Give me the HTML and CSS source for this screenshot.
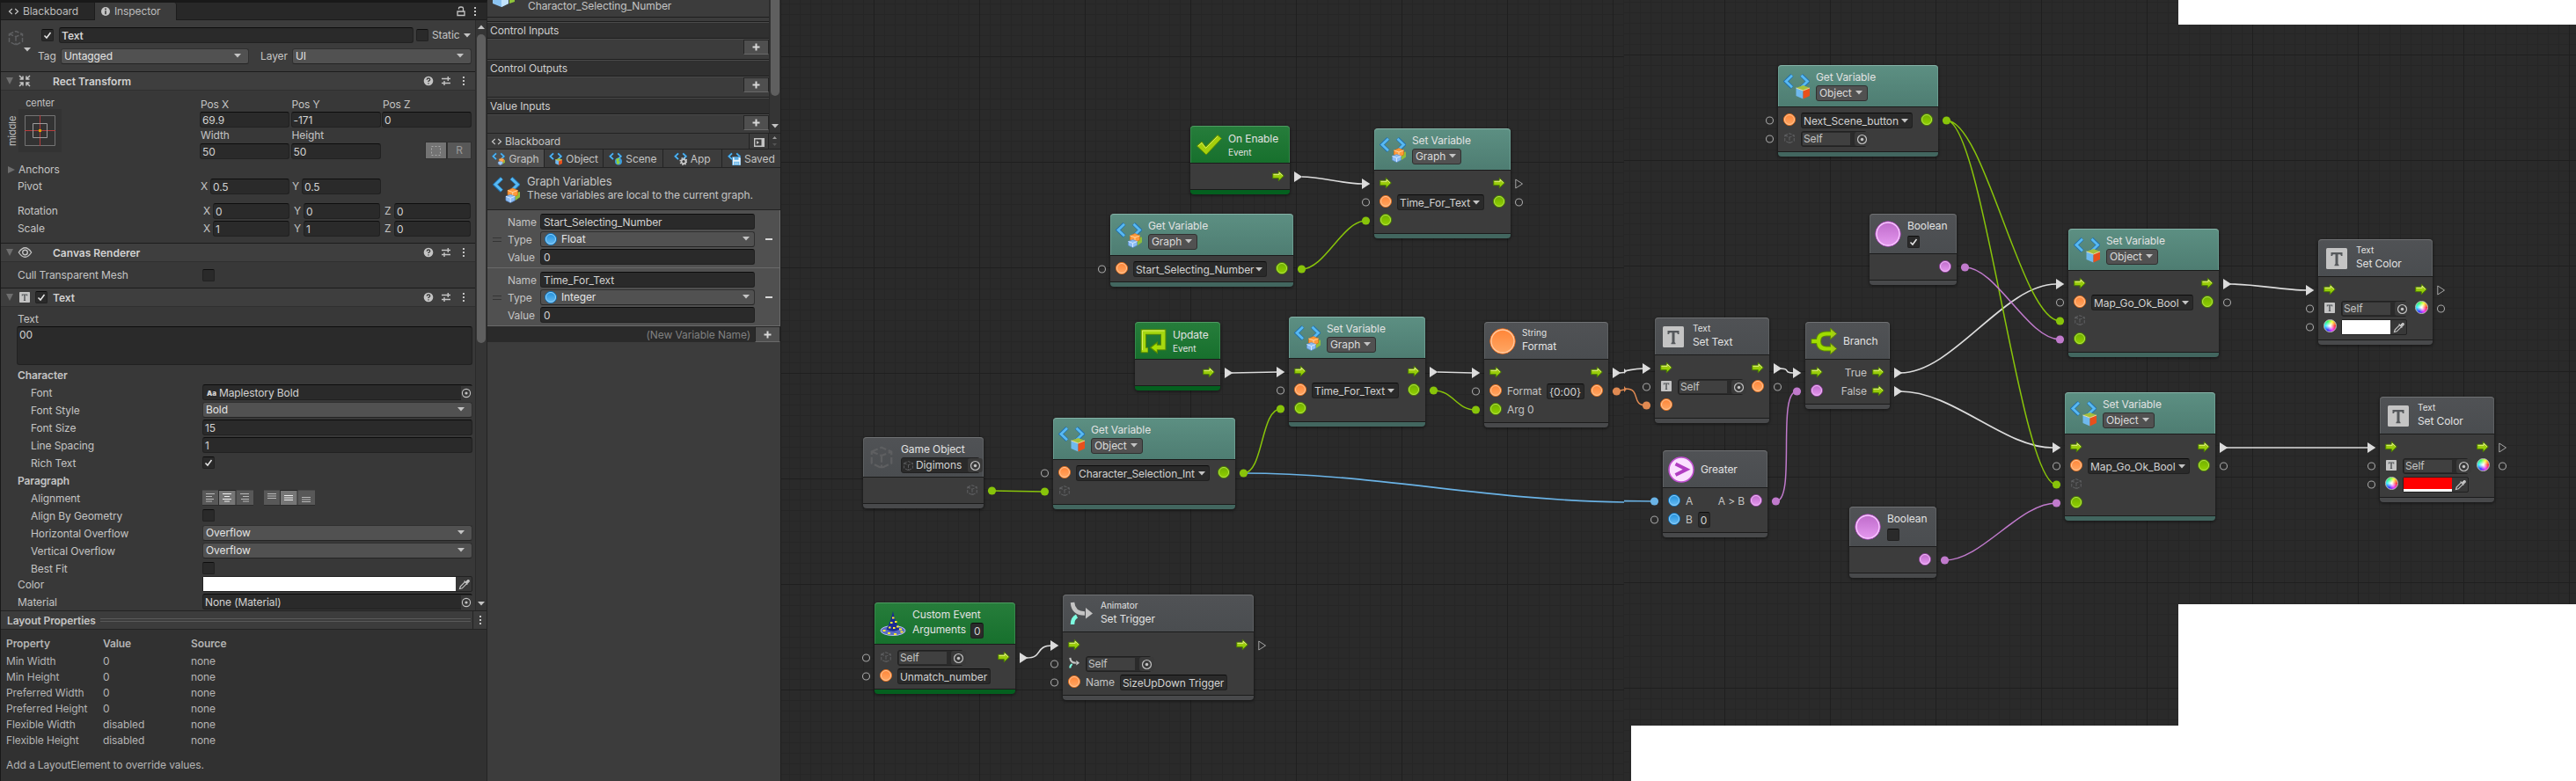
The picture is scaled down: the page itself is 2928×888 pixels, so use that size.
FILE: index.html
```html
<!DOCTYPE html>
<html lang="en">
<head>
<meta charset="utf-8">
<title>Visual Scripting</title>
<link rel="stylesheet" href="styles.css">
</head>
<body>
<svg class="defs" width="0" height="0">
  <defs>
    <linearGradient id="gO" x1="0" y1="0" x2="0" y2="1"><stop offset="0" stop-color="#ff8436"/><stop offset="1" stop-color="#ffa865"/></linearGradient>
    <linearGradient id="gG" x1="0" y1="0" x2="0" y2="1"><stop offset="0" stop-color="#6fae00"/><stop offset="1" stop-color="#93d200"/></linearGradient>
    <linearGradient id="gB" x1="0" y1="0" x2="0" y2="1"><stop offset="0" stop-color="#1d8edb"/><stop offset="1" stop-color="#6cbdf2"/></linearGradient>
    <linearGradient id="gP" x1="0" y1="0" x2="0" y2="1"><stop offset="0" stop-color="#bd69c9"/><stop offset="1" stop-color="#e69af0"/></linearGradient>
    <linearGradient id="gA" x1="0" y1="0" x2="0" y2="1"><stop offset="0" stop-color="#b3cc1a"/><stop offset="1" stop-color="#84cc00"/></linearGradient>
    <symbol id="dO" viewBox="0 0 14 14"><circle cx="7" cy="7" r="6.5" fill="url(#gO)" stroke="#e0701f"/><circle cx="7" cy="7" r="5.5" fill="none" stroke="#ffc79a"/></symbol>
    <symbol id="dG" viewBox="0 0 14 14"><circle cx="7" cy="7" r="6.5" fill="url(#gG)" stroke="#4c8000"/><circle cx="7" cy="7" r="5.5" fill="none" stroke="#b2e04a"/></symbol>
    <symbol id="dB" viewBox="0 0 14 14"><circle cx="7" cy="7" r="6.5" fill="url(#gB)" stroke="#0f6fb5"/><circle cx="7" cy="7" r="5.5" fill="none" stroke="#8fd0fa"/></symbol>
    <symbol id="dP" viewBox="0 0 14 14"><circle cx="7" cy="7" r="6.5" fill="url(#gP)" stroke="#8d3f9a"/><circle cx="7" cy="7" r="5.5" fill="none" stroke="#f0bdf6"/></symbol>
    <symbol id="bigO" viewBox="0 0 30 30"><circle cx="15" cy="15" r="14.3" fill="url(#gO)" stroke="#e2671a"/><circle cx="15" cy="15" r="13" fill="none" stroke="#ffcaa2" stroke-width="1.3"/></symbol>
    <symbol id="bigP" viewBox="0 0 30 30"><circle cx="15" cy="15" r="14.3" fill="url(#gP)" stroke="#a044b0"/><circle cx="15" cy="15" r="13" fill="none" stroke="#f8c8ff" stroke-width="1.4"/></symbol>
    <symbol id="arr" viewBox="0 0 14 14"><path d="M.7 4.3h6.6V1.2L13.3 7l-6 5.800V9.700H.7z" fill="url(#gA)" stroke="#4c7d00"/><path d="M1.500 5.300h6.600V3l3.800 3.700" fill="none" stroke="#e3f08a"/></symbol>
    <symbol id="cube" viewBox="0 0 16 16"><path d="M2 4.500l6-2.500 6 2.500v7L8 14.500 2 11.500zM2 4.500l6 2.500 6-2.500M8 7v7.500" fill="none" stroke="#5e5f61" stroke-width="1.200" stroke-dasharray="4 1.500"/></symbol>
    <symbol id="br" viewBox="0 0 30 30"><path d="M10 2.500L2.800 9.500 10 16.500M20.500 2.500L27.700 9.500 20.500 16.500" fill="none" stroke="#1f6fae" stroke-width="4.400"/><path d="M10 2.800L3 9.500l7 6.700M20.500 2.800L27.500 9.500l-7 6.700" fill="none" stroke="#58b9f2" stroke-width="2.800"/></symbol>
    <symbol id="vG" viewBox="0 0 30 30"><use href="#br" width="30" height="30"/><path d="M22 19l8-1.500v6L25 27z" fill="#8fbd3a"/><path d="M16.500 16l5.500-2.500 5.500 2.500v5L22 23.500l-5.500-2.500z" fill="#ff9a3c" stroke="#d9700f" stroke-width=".7"/><path d="M16.500 16l5.500 2 5.500-2M22 18v5" fill="none" stroke="#ffd9a8" stroke-width=".9"/><path d="M14.500 22.500l5-2 5 2v4.500l-5 2.500-5-2.500z" fill="#8cbdf5" stroke="#5c8fd0" stroke-width=".7"/><path d="M14.500 22.500l5 2 5-2M19.500 24.500v4.500" fill="none" stroke="#dcebff" stroke-width=".9"/></symbol>
    <symbol id="vO" viewBox="0 0 30 30"><use href="#br" width="30" height="30"/><path d="M14.500 17l8-3 7.500 3-7.500 3z" fill="#a4bf3d"/><path d="M14.500 17l8 3v9.500l-8-3.500z" fill="#6fb9ee"/><path d="M30 17l-7.500 3v9.500L30 26z" fill="#e8501c"/><path d="M14.500 17l8 3 7.500-3" fill="none" stroke="#ffe9b0" stroke-width=".8"/></symbol>
    <symbol id="vS" viewBox="0 0 30 30"><use href="#br" width="30" height="30"/><circle cx="22" cy="21" r="8" fill="#3b9be0"/><path d="M16 17q5-6 9-2l-3 5 4 2-4 6q-6-2-4-7z" fill="#8fd03a"/></symbol>
    <symbol id="vA" viewBox="0 0 30 30"><use href="#br" width="30" height="30"/><circle cx="22" cy="21" r="5" fill="none" stroke="#c9c9c9" stroke-width="3.500"/><circle cx="22" cy="21" r="7.700" fill="none" stroke="#c9c9c9" stroke-width="3" stroke-dasharray="3 3.050"/></symbol>
    <symbol id="vD" viewBox="0 0 30 30"><use href="#br" width="30" height="30"/><path d="M11 11h17l2 2v17H11z" fill="#eaf4fb" stroke="#3c8fca" stroke-width="1.500"/><path d="M15 11.500h10v6H15zM14.500 21.500h12V30h-12z" fill="#5aaee6"/><path d="M16 24h9M16 27h9" stroke="#fff"/></symbol>
    <symbol id="chk" viewBox="0 0 30 30"><path d="M1.500 16l5.500-5 4.500 6L25 3.500l4.500 4L12 26z" fill="#a4cf0c" stroke="#5f8a00"/><path d="M2.800 16l4.200-3.500 4.500 6L25 5" fill="none" stroke="#d6ee5e" stroke-width=".9"/></symbol>
    <symbol id="loop" viewBox="0 0 30 30"><path d="M9 25H3.800V4.500h22.400V22H18" fill="none" stroke="#5c8c00" stroke-width="6.400"/><path d="M20 15v14.500L10.500 22.200z" fill="#5c8c00"/><path d="M8.500 25H3.800V4.500h22.400V22H18" fill="none" stroke="#a6d810" stroke-width="4.400"/><path d="M18.800 17.500v9.500l-6.200-4.800z" fill="#a6e000"/><path d="M2.500 25V3h25" fill="none" stroke="#d9ee62"/></symbol>
    <symbol id="branch" viewBox="0 0 30 30"><path d="M.5 15h8.500M24 6.500h-6q-9 0-9 8.500t9 8.500h6" fill="none" stroke="#5c8c00" stroke-width="6.200"/><path d="M22.500 .3l7.300 6.200-7.300 6.200zM22.500 17.300l7.300 6.200-7.300 6.200z" fill="#a6c81a" stroke="#5c8c00"/><path d="M1.300 15h8M25 6.500h-7q-9 0-9 8.500t9 8.500h7" fill="none" stroke="#a0dc00" stroke-width="4.200"/></symbol>
    <symbol id="great" viewBox="0 0 30 30"><circle cx="15" cy="15" r="14" fill="#fbe0ff" stroke="#c24fd2" stroke-width="1.500"/><path d="M8.500 8.500L21 14.700 8.500 21" fill="none" stroke="#b13ec2" stroke-width="4"/></symbol>
    <symbol id="tee" viewBox="0 0 24 24"><rect width="24" height="24" rx="1.500" fill="#c4c4c4"/><path d="M5.500 5h13v4h-1.500l-.8-1.800h-2.700V18l1 1.200v1h-5v-1l1-1.200V7.200H7.800L7 9H5.500z" fill="#55585b"/></symbol>
    <symbol id="trig" viewBox="0 0 30 30"><path d="M5 2q1 12.500 14 12.500" fill="none" stroke="#c4c4c4" stroke-width="4.500"/><path d="M20 8l8 6.500-8 6z" fill="#c4c4c4"/><path d="M5 27q0-7 5-9.500" fill="none" stroke="#7dfce0" stroke-width="4.500"/></symbol>
    <symbol id="hat" viewBox="0 0 30 30"><ellipse cx="15" cy="23" rx="14" ry="5.500" fill="#5b6cc4" stroke="#b4bde8" stroke-width="1"/><path d="M15 1Q12 14 7.500 21.500q7.500 4.500 15 0Q17.500 14 15 1z" fill="#1c2a94"/><path d="M14 8.500h2.500M12 14h2.500M17 13h2.500M10 19.500h2.500M15 20h2.500M19 18.500h2.500M3.500 23h3M9 26h3M16 27h3M23.500 24.500h3M22 21.500h3" stroke="#ffe92e" stroke-width="2"/></symbol>
    <symbol id="pip" viewBox="0 0 14 14"><path d="M1.500 12.500l.8-2.700L7.500 4.600l2 2-5.200 5.200zM6.700 3.500l3.800 3.800" fill="none" stroke="#c4c4c4" stroke-width="1.200"/><path d="M8.500 4.500l2-2q2.200-.8 1.900 1.700l-2 2z" fill="#c4c4c4" stroke="#c4c4c4"/></symbol>
    <symbol id="help" viewBox="0 0 12 12"><circle cx="6" cy="6" r="5.300" fill="#c4c4c4"/><path d="M4.200 4.700q.1-1.700 1.800-1.700t1.800 1.500q0 .9-1.800 1.900v.6M6 8.200v1.300" fill="none" stroke="#3c3c3c" stroke-width="1.300"/></symbol>
    <symbol id="slid" viewBox="0 0 12 12"><path d="M1 3.500h10M8.300 1v5M1 8.500h10M4 6v5" fill="none" stroke="#c4c4c4" stroke-width="1.400"/></symbol>
    <symbol id="keb" viewBox="0 0 4 12"><path d="M1 1h2v2H1zM1 5h2v2H1zM1 9h2v2H1z" fill="#c4c4c4"/></symbol>
    <symbol id="dn" viewBox="0 0 8 5"><path d="M0 0h8L4 4.500z" fill="#c4c4c4"/></symbol>
    <symbol id="tick" viewBox="0 0 14 14"><path d="M3.500 7.500L6 10l4.500-6" fill="none" stroke="#e8e8e8" stroke-width="1.500"/></symbol>
    <symbol id="target" viewBox="0 0 12 12"><circle cx="6" cy="6" r="4.600" fill="none" stroke="#c4c4c4" stroke-width="1.100"/><circle cx="6" cy="6" r="1.600" fill="#c4c4c4"/></symbol>
    <symbol id="code" viewBox="0 0 12 10"><path d="M4.300 2L1 5l3.300 3M7.700 2L11 5 7.700 8" fill="none" stroke="#c4c4c4" stroke-width="1.200"/></symbol>
    <symbol id="plus" viewBox="0 0 9 9"><path d="M4.500 .5v8M.5 4.500h8" stroke="#d8d8d8" stroke-width="2"/></symbol>
    <symbol id="tri" viewBox="0 0 10 14" overflow="visible"><path d="M0 1l9.300 6L0 13z" fill="#dcdcdc"/></symbol>
    <symbol id="triO" viewBox="0 0 10 14" overflow="visible"><path d="M.8 2l7.700 5L.8 12z" fill="none" stroke="#a4a4a4"/></symbol>
    <symbol id="po" viewBox="0 0 10 10" overflow="visible"><circle cx="5" cy="5" r="4" fill="none" stroke="#a4a4a4" stroke-width="1.100"/></symbol>
  </defs>
</svg>

<div class="app">
<section class="inspector">
  <div class="tabs">
    <div class="tab"><svg class="code"><use href="#code"/></svg>Blackboard</div>
    <div class="tab on"><svg width="10" height="10" viewBox="0 0 10 10"><circle cx="5" cy="5" r="5" fill="#c4c4c4"/><path d="M5 1.600v1.600M5 4.300v4" stroke="#3c3c3c" stroke-width="1.600"/></svg>Inspector</div>
    <span class="grow"></span>
    <svg class="lock" width="10" height="12" viewBox="0 0 10 12"><path d="M1 6h8v4.500H1zM2.500 3.500V2.500Q2.500 1 4.500 1h1Q7.500 1 7.500 2.500V6" fill="none" stroke="#c4c4c4" stroke-width="1.300"/></svg>
    <svg class="keb"><use href="#keb"/></svg>
  </div>
  <div class="scroll">
    <div class="content">
      <div class="objhead">
        <div class="objicon"><svg width="20" height="22"><use href="#cube"/></svg><svg class="dn"><use href="#dn"/></svg></div>
        <div class="objrows">
          <div class="orow"><span class="cb ml4"><svg><use href="#tick"/></svg></span><span class="in name">Text</span><span class="cb"></span><span class="static">Static</span><svg class="dn"><use href="#dn"/></svg></div>
          <div class="orow"><span class="tag">Tag</span><span class="dd w214">Untagged<svg class="dn"><use href="#dn"/></svg></span><span class="layer">Layer</span><span class="dd w204">UI<svg class="dn"><use href="#dn"/></svg></span></div>
        </div>
      </div>
      <div class="comp"><i class="fold"></i><svg class="cic" viewBox="0 0 14 14"><path d="M1 1l4 4M13 1L9 5M1 13l4-4M13 13L9 9M5 1.500V5H1.500M9 1.500V5h3.500M5 12.500V9H1.500M9 12.500V9h3.500" fill="none" stroke="#c4c4c4" stroke-width="1.500"/></svg><b class="ml23">Rect Transform</b><svg class="help"><use href="#help"/></svg><svg class="slid"><use href="#slid"/></svg><svg class="keb"><use href="#keb"/></svg></div>
      <div class="rect">
        <div class="anchor">
          <span class="mid">middle</span>
          <div><span class="cen">center</span>
          <svg width="49" height="49" viewBox="0 0 49 49"><rect width="49" height="49" fill="#333"/><path d="M7.500 7.500h34v34h-34z" fill="none" stroke="#747474"/><path d="M24.500 7v35M7 24.500h35" stroke="#b83c3c"/><path d="M16.500 16.500h16v16h-16z" fill="none" stroke="#9c9c9c"/><path d="M23 23h3v3h-3z" fill="#d8a300"/></svg></div>
        </div>
        <div class="pos">
          <span>Pos X</span><span>Pos Y</span><span>Pos Z</span>
          <span class="in">69.9</span><span class="in">-171</span><span class="in">0</span>
          <span>Width</span><span>Height</span><span></span>
          <span class="in">50</span><span class="in">50</span><span class="rb"><i><svg width="11" height="11"><path d="M.5 .5h10v10H.5z" fill="none" stroke="#a8a8a8" stroke-dasharray="2 2"/></svg></i><i>R</i></span>
        </div>
      </div>
      <div class="line anch"><i class="fold side"></i>Anchors</div>
      <div class="line pv"><span class="lab">Pivot</span><em>X</em><span class="in">0.5</span><em>Y</em><span class="in">0.5</span></div>
      <div class="line xyz rot"><span class="lab">Rotation</span><em>X</em><span class="in">0</span><em>Y</em><span class="in">0</span><em>Z</em><span class="in">0</span></div>
      <div class="line xyz scl"><span class="lab">Scale</span><em>X</em><span class="in">1</span><em>Y</em><span class="in">1</span><em>Z</em><span class="in">0</span></div>
      <div class="comp"><i class="fold"></i><svg class="cic wide" viewBox="0 0 16 14"><path d="M.8 7Q8-3.500 15.200 7 8 17.500.8 7z" fill="none" stroke="#c4c4c4" stroke-width="1.300"/><circle cx="8" cy="7" r="2.800" fill="none" stroke="#c4c4c4" stroke-width="1.400"/></svg><b class="ml23">Canvas Renderer</b><svg class="help"><use href="#help"/></svg><svg class="slid"><use href="#slid"/></svg><svg class="keb"><use href="#keb"/></svg></div>
      <div class="cull"><span class="l1">Cull Transparent Mesh</span><span class="cb"></span></div>
      <div class="comp"><i class="fold"></i><svg class="cic tt"><use href="#tee"/></svg><span class="cb hcb"><svg><use href="#tick"/></svg></span><b class="ml7">Text</b><svg class="help"><use href="#help"/></svg><svg class="slid"><use href="#slid"/></svg><svg class="keb"><use href="#keb"/></svg></div>
      <div class="textlab">Text</div>
      <div class="area">00</div>
      <div class="f head"><b>Character</b></div>
      <div class="f"><span>Font</span><span class="in obj"><strong>Aa</strong>Maplestory Bold<i><svg><use href="#target"/></svg></i></span></div>
      <div class="f"><span>Font Style</span><span class="dd">Bold<svg class="dn"><use href="#dn"/></svg></span></div>
      <div class="f"><span>Font Size</span><span class="in">15</span></div>
      <div class="f"><span>Line Spacing</span><span class="in">1</span></div>
      <div class="f"><span>Rich Text</span><span class="cb"><svg><use href="#tick"/></svg></span></div>
      <div class="f head"><b>Paragraph</b></div>
      <div class="f"><span>Alignment</span>
        <svg width="129" height="18" viewBox="0 0 129 18"><path d="M0 .5h58v17H0zM70 .5h58v17H70z" fill="#585858"/><path d="M18 0h20v18H18zM88 0h20v18H88z" fill="#767676"/><path d="M18 .5h20M88 .5h20" stroke="#222"/><path d="M18.500 0v17M38 0v17M88.500 0v17M108 0v17M0 17.500h58M70 17.500h58" stroke="#2c2c2c"/><path d="M4 4.500h10M4 7.500h7M4 10.500h9M4 13h7M43 4.500h10M46 7.500h7M44 10.500h9M46 13h7M74 4.500h10M74 7h10M74 9.500h10M113 8.500h10M113 11h10M113 13.500h10" stroke="#b8b8b8"/><path d="M23 4.500h10M25 7.500h6M23 10.500h10M25 13h6M93 6.500h10M93 9h10M93 11.500h10" stroke="#eee"/></svg></div>
      <div class="f"><span>Align By Geometry</span><span class="cb"></span></div>
      <div class="f"><span>Horizontal Overflow</span><span class="dd">Overflow<svg class="dn"><use href="#dn"/></svg></span></div>
      <div class="f"><span>Vertical Overflow</span><span class="dd">Overflow<svg class="dn"><use href="#dn"/></svg></span></div>
      <div class="f last"><span>Best Fit</span><span class="cb"></span></div>
      <div class="f out"><span>Color</span><span class="col"><i></i><svg><use href="#pip"/></svg></span></div>
      <div class="f out"><span>Material</span><span class="in obj">None (Material)<i><svg><use href="#target"/></svg></i></span></div>
    </div>
    <div class="sbar"><svg width="8" height="5" viewBox="0 0 8 5"><path d="M0 5h8L4 .5z" fill="#c4c4c4"/></svg><i></i><svg class="dn"><use href="#dn"/></svg></div>
  </div>
  <div class="lphead"><b>Layout Properties</b><span class="dbl"></span><span class="kcell"><svg class="keb"><use href="#keb"/></svg></span></div>
  <div class="lp">
    <div class="lrow lh"><b>Property</b><b>Value</b><b>Source</b></div>
    <div class="lrow"><span>Min Width</span><span>0</span><span>none</span></div>
    <div class="lrow"><span>Min Height</span><span>0</span><span>none</span></div>
    <div class="lrow"><span>Preferred Width</span><span>0</span><span>none</span></div>
    <div class="lrow"><span>Preferred Height</span><span>0</span><span>none</span></div>
    <div class="lrow"><span>Flexible Width</span><span>disabled</span><span>none</span></div>
    <div class="lrow"><span>Flexible Height</span><span>disabled</span><span>none</span></div>
    <div class="add">Add a LayoutElement to override values.</div>
  </div>
</section>

<section class="graphinsp">
  <div class="gtop">
    <div class="gcont">
      <div class="gtitle"><svg width="30" height="10" viewBox="0 0 30 10"><path d="M2 0v4l10 4 8-4V0z" fill="#8cc4f2"/><path d="M12 0v8l8-4V0z" fill="#c2e2fb"/><path d="M21 0v4l6-2V0z" fill="#8fc43a"/></svg><span>Charactor_Selecting_Number</span></div>
      <div class="glist"><div class="gh">Control Inputs</div><div class="gb"><span class="pl"><svg><use href="#plus"/></svg></span></div></div>
      <div class="glist"><div class="gh">Control Outputs</div><div class="gb"><span class="pl"><svg><use href="#plus"/></svg></span></div></div>
      <div class="glist"><div class="gh">Value Inputs</div><div class="gb"><span class="pl"><svg><use href="#plus"/></svg></span></div></div>
    </div>
    <div class="gsb"><i></i><svg class="dn"><use href="#dn"/></svg></div>
  </div>
  <div class="bbar"><div class="bt"><svg class="code"><use href="#code"/></svg>Blackboard</div><div class="bi"><svg width="12" height="10" viewBox="0 0 12 10"><path d="M.7 .7h10.600v8.600H.7z" fill="none" stroke="#c4c4c4" stroke-width="1.400"/><path d="M8.500 1h3v8h-3zM3 3l3 2-3 2z" fill="#c4c4c4"/></svg></div><div class="bs"><svg width="5" height="3" viewBox="0 0 5 3"><path d="M0 3h5L2.500 0z" fill="#999"/></svg><svg width="5" height="3" viewBox="0 0 5 3"><path d="M0 0h5L2.500 3z" fill="#555"/></svg></div></div>
  <div class="vtabs"><div class="on"><svg><use href="#vG"/></svg>Graph</div><div><svg><use href="#vO"/></svg>Object</div><div><svg><use href="#vS"/></svg>Scene</div><div><svg><use href="#vA"/></svg>App</div><div><svg><use href="#vD"/></svg>Saved</div></div>
  <div class="vinfo"><svg><use href="#vG"/></svg><div><h4>Graph Variables</h4><p>These variables are local to the current graph.</p></div></div>
  <div class="var"><i class="grip"></i><div class="vf"><label>Name</label><span class="in">Start_Selecting_Number</span><label>Type</label><span class="dd"><svg class="dot"><use href="#dB"/></svg>Float<svg class="dn"><use href="#dn"/></svg></span><label>Value</label><span class="in">0</span></div><i class="minus"></i></div>
  <div class="var"><i class="grip"></i><div class="vf"><label>Name</label><span class="in">Time_For_Text</span><label>Type</label><span class="dd"><svg class="dot"><use href="#dB"/></svg>Integer<svg class="dn"><use href="#dn"/></svg></span><label>Value</label><span class="in">0</span></div><i class="minus"></i></div>
  <div class="newvar"><span>(New Variable Name)</span><span class="pl"><svg><use href="#plus"/></svg></span></div>
</section>

<main class="canvas">
  <div class="grid gl"></div><div class="grid gr"></div>
  <div class="blank b1"></div><div class="blank b2"></div><div class="blank b3"></div>

  <div class="node ev" style="left:1353px;top:143px;width:113px"><div class="hd h42"><svg><use href="#chk"/></svg><div class="t ts"><p>On Enable</p><small>Event</small></div></div><div class="bd"><div class="row"><span class="grow"></span><svg><use href="#arr"/></svg></div></div></div>

  <div class="node va" style="left:1562px;top:146px;width:155px"><div class="hd h47"><svg><use href="#vG"/></svg><div class="t"><p>Set Variable</p><span class="sel">Graph<svg class="dn"><use href="#dn"/></svg></span></div></div><div class="bd"><div class="row"><svg><use href="#arr"/></svg><span class="grow"></span><svg><use href="#arr"/></svg></div><div class="row"><svg><use href="#dO"/></svg><span class="combo" style="width:99px">Time_For_Text<svg class="dn"><use href="#dn"/></svg></span><span class="grow"></span><svg><use href="#dG"/></svg></div><div class="row"><svg><use href="#dG"/></svg></div></div></div>

  <div class="node va" style="left:1262px;top:243px;width:208px"><div class="hd h47"><svg><use href="#vG"/></svg><div class="t"><p>Get Variable</p><span class="sel">Graph<svg class="dn"><use href="#dn"/></svg></span></div></div><div class="bd"><div class="row"><svg><use href="#dO"/></svg><span class="combo" style="width:152px">Start_Selecting_Number<svg class="dn"><use href="#dn"/></svg></span><span class="grow"></span><svg><use href="#dG"/></svg></div></div></div>

  <div class="node ev" style="left:1290px;top:366px;width:97px"><div class="hd h42"><svg><use href="#loop"/></svg><div class="t ts"><p>Update</p><small>Event</small></div></div><div class="bd"><div class="row"><span class="grow"></span><svg><use href="#arr"/></svg></div></div></div>

  <div class="node va" style="left:1465px;top:360px;width:155px"><div class="hd h47"><svg><use href="#vG"/></svg><div class="t"><p>Set Variable</p><span class="sel">Graph<svg class="dn"><use href="#dn"/></svg></span></div></div><div class="bd"><div class="row"><svg><use href="#arr"/></svg><span class="grow"></span><svg><use href="#arr"/></svg></div><div class="row"><svg><use href="#dO"/></svg><span class="combo" style="width:99px">Time_For_Text<svg class="dn"><use href="#dn"/></svg></span><span class="grow"></span><svg><use href="#dG"/></svg></div><div class="row"><svg><use href="#dG"/></svg></div></div></div>

  <div class="node" style="left:1687px;top:366px;width:141px"><div class="hd h42"><svg><use href="#bigO"/></svg><div class="t st"><small>String</small><p>Format</p></div></div><div class="bd"><div class="row"><svg><use href="#arr"/></svg><span class="grow"></span><svg><use href="#arr"/></svg></div><div class="row"><svg><use href="#dO"/></svg><span>Format</span><span class="in">{0:00}</span><span class="grow"></span><svg><use href="#dO"/></svg></div><div class="row"><svg><use href="#dG"/></svg><span>Arg 0</span></div></div></div>

  <div class="node" style="left:981px;top:497px;width:137px"><div class="hd h45"><svg><use href="#cube"/></svg><div class="t"><p>Game Object</p><span class="self go"><svg><use href="#cube"/></svg>Digimons<i><svg><use href="#target"/></svg></i></span></div></div><div class="bd"><div class="row"><span class="grow"></span><svg><use href="#cube"/></svg></div></div></div>

  <div class="node va" style="left:1197px;top:475px;width:207px"><div class="hd h47"><svg><use href="#vO"/></svg><div class="t"><p>Get Variable</p><span class="sel">Object<svg class="dn"><use href="#dn"/></svg></span></div></div><div class="bd"><div class="row"><svg><use href="#dO"/></svg><span class="combo" style="width:152px">Character_Selection_Int<svg class="dn"><use href="#dn"/></svg></span><span class="grow"></span><svg><use href="#dG"/></svg></div><div class="row"><svg><use href="#cube"/></svg></div></div></div>

  <div class="node ev" style="left:994px;top:685px;width:160px"><div class="hd h47"><svg><use href="#hat"/></svg><div class="t"><p>Custom Event</p><div class="args">Arguments<span class="in">0</span></div></div></div><div class="bd"><div class="row"><svg><use href="#cube"/></svg><span class="self"><u>Self</u><i><svg><use href="#target"/></svg></i></span><span class="grow"></span><svg><use href="#arr"/></svg></div><div class="row"><svg><use href="#dO"/></svg><span class="in">Unmatch_number</span></div></div></div>

  <div class="node" style="left:1208px;top:676px;width:217px"><div class="hd h42"><svg><use href="#trig"/></svg><div class="t st"><small>Animator</small><p>Set Trigger</p></div></div><div class="bd"><div class="row"><svg><use href="#arr"/></svg><span class="grow"></span><svg><use href="#arr"/></svg></div><div class="row"><svg><use href="#trig"/></svg><span class="self"><u>Self</u><i><svg><use href="#target"/></svg></i></span></div><div class="row"><svg><use href="#dO"/></svg><span>Name</span><span class="in">SizeUpDown Trigger</span></div></div></div>

  <div class="node" style="left:1881px;top:361px;width:130px"><div class="hd h42"><svg class="tee"><use href="#tee"/></svg><div class="t st"><small>Text</small><p>Set Text</p></div></div><div class="bd"><div class="row"><svg><use href="#arr"/></svg><span class="grow"></span><svg><use href="#arr"/></svg></div><div class="row"><svg class="tsm"><use href="#tee"/></svg><span class="self"><u>Self</u><i><svg><use href="#target"/></svg></i></span><span class="grow"></span><svg><use href="#dO"/></svg></div><div class="row"><svg><use href="#dO"/></svg></div></div></div>

  <div class="node" style="left:2052px;top:366px;width:96px"><div class="hd h42"><svg><use href="#branch"/></svg><div class="t one"><p>Branch</p></div></div><div class="bd"><div class="row"><svg><use href="#arr"/></svg><span class="grow"></span><span>True</span><svg><use href="#arr"/></svg></div><div class="row"><svg><use href="#dP"/></svg><span class="grow"></span><span>False</span><svg><use href="#arr"/></svg></div></div></div>

  <div class="node" style="left:1890px;top:512px;width:119px"><div class="hd h42"><svg><use href="#great"/></svg><div class="t one"><p>Greater</p></div></div><div class="bd"><div class="row"><svg><use href="#dB"/></svg><span>A</span><span class="grow"></span><span>A &gt; B</span><svg><use href="#dP"/></svg></div><div class="row"><svg><use href="#dB"/></svg><span>B</span><span class="in">0</span></div></div></div>

  <div class="node" style="left:2102px;top:576px;width:99px"><div class="hd h45"><svg><use href="#bigP"/></svg><div class="t"><p>Boolean</p><span class="cb"></span></div></div><div class="bd"><div class="row"><span class="grow"></span><svg><use href="#dP"/></svg></div></div></div>

  <div class="node va" style="left:2021px;top:74px;width:182px"><div class="hd h47"><svg><use href="#vO"/></svg><div class="t"><p>Get Variable</p><span class="sel">Object<svg class="dn"><use href="#dn"/></svg></span></div></div><div class="bd"><div class="row"><svg><use href="#dO"/></svg><span class="combo" style="width:127px">Next_Scene_button<svg class="dn"><use href="#dn"/></svg></span><span class="grow"></span><svg><use href="#dG"/></svg></div><div class="row"><svg><use href="#cube"/></svg><span class="self"><u>Self</u><i><svg><use href="#target"/></svg></i></span></div></div></div>

  <div class="node" style="left:2125px;top:243px;width:99px"><div class="hd h45"><svg><use href="#bigP"/></svg><div class="t"><p>Boolean</p><span class="cb"><svg><use href="#tick"/></svg></span></div></div><div class="bd"><div class="row"><span class="grow"></span><svg><use href="#dP"/></svg></div></div></div>

  <div class="node va" style="left:2351px;top:260px;width:171px"><div class="hd h47"><svg><use href="#vO"/></svg><div class="t"><p>Set Variable</p><span class="sel">Object<svg class="dn"><use href="#dn"/></svg></span></div></div><div class="bd"><div class="row"><svg><use href="#arr"/></svg><span class="grow"></span><svg><use href="#arr"/></svg></div><div class="row"><svg><use href="#dO"/></svg><span class="combo" style="width:116px">Map_Go_Ok_Bool<svg class="dn"><use href="#dn"/></svg></span><span class="grow"></span><svg><use href="#dG"/></svg></div><div class="row"><svg><use href="#cube"/></svg></div><div class="row"><svg><use href="#dG"/></svg></div></div></div>

  <div class="node va" style="left:2347px;top:446px;width:171px"><div class="hd h47"><svg><use href="#vO"/></svg><div class="t"><p>Set Variable</p><span class="sel">Object<svg class="dn"><use href="#dn"/></svg></span></div></div><div class="bd"><div class="row"><svg><use href="#arr"/></svg><span class="grow"></span><svg><use href="#arr"/></svg></div><div class="row"><svg><use href="#dO"/></svg><span class="combo" style="width:116px">Map_Go_Ok_Bool<svg class="dn"><use href="#dn"/></svg></span><span class="grow"></span><svg><use href="#dG"/></svg></div><div class="row"><svg><use href="#cube"/></svg></div><div class="row"><svg><use href="#dG"/></svg></div></div></div>

  <div class="node" style="left:2635px;top:272px;width:130px"><div class="hd h42"><svg class="tee"><use href="#tee"/></svg><div class="t st"><small>Text</small><p>Set Color</p></div></div><div class="bd"><div class="row"><svg><use href="#arr"/></svg><span class="grow"></span><svg><use href="#arr"/></svg></div><div class="row"><svg class="tsm"><use href="#tee"/></svg><span class="self"><u>Self</u><i><svg><use href="#target"/></svg></i></span><span class="grow"></span><i class="wheel"></i></div><div class="row"><i class="wheel"></i><span class="col"><i></i><svg><use href="#pip"/></svg></span></div></div></div>

  <div class="node" style="left:2705px;top:451px;width:130px"><div class="hd h42"><svg class="tee"><use href="#tee"/></svg><div class="t st"><small>Text</small><p>Set Color</p></div></div><div class="bd"><div class="row"><svg><use href="#arr"/></svg><span class="grow"></span><svg><use href="#arr"/></svg></div><div class="row"><svg class="tsm"><use href="#tee"/></svg><span class="self"><u>Self</u><i><svg><use href="#target"/></svg></i></span><span class="grow"></span><i class="wheel"></i></div><div class="row"><i class="wheel"></i><span class="col red"><i></i><svg><use href="#pip"/></svg></span></div></div></div>

  <svg class="wires" width="2928" height="888" viewBox="0 0 2928 888">
    <g fill="none" stroke="#dcdcdc" stroke-width="1.700">
      <path d="M1480 201C1502 201 1526 209 1548 209M1400 424L1452 423M1634 423L1674 424M1841 424L1846 423.500M1846 422C1854 421 1856 419 1868 419M2024 419C2036 419 2026 424 2038 424M1167 748C1186 748 1176 734 1196 734M2160 424C2220 424 2278 323 2337 323M2160 445C2220 445 2278 509 2333 509M2535 323C2565 323 2595 330 2622 330M2530 509H2692"/>
    </g>
    <path d="M1846 419l3 3-3 3z" fill="#dcdcdc"/><path d="M1846 439l3 3.500-3 3.500z" fill="#e08a52"/>
    <path d="M1413 538C1560 538 1690 569 1846 571M1846 569.500L1880 570" fill="none" stroke="#6ab3e6" stroke-width="1.600"/>
    <g fill="none" stroke="#88c40a" stroke-width="1.500"><path d="M1479.500 306C1506 306 1526 251 1552.500 251M1413.500 538C1436 538 1433 465 1455.500 465M1629.500 444C1652 444 1655 466 1677.500 466M1127.500 558L1187.500 559M2212.500 137C2255.500 137 2298 365 2341.500 365M2212.500 137C2254 137 2296 551 2337.500 551"/></g>
    <g fill="none" stroke="#c07acc" stroke-width="1.500"><path d="M2018.500 570C2042 570 2019 445 2042.500 445M2233.500 304C2269 304 2305 386 2341.500 386M2210.500 637C2253 637 2295 572 2337.500 572"/></g>
    <g fill="none" stroke="#e08a52" stroke-width="1.500"><path d="M1837.500 445L1846 443M1848 442C1866 442 1853 461 1871.500 461"/></g>
    <g fill="#88c40a"><circle cx="1479.500" cy="306" r="4.600"/><circle cx="1552.500" cy="251" r="4.600"/><circle cx="1413.500" cy="538" r="4.600"/><circle cx="1455.500" cy="465" r="4.600"/><circle cx="1629.500" cy="444" r="4.600"/><circle cx="1677.500" cy="466" r="4.600"/><circle cx="1127.500" cy="558" r="4.600"/><circle cx="1187.500" cy="559" r="4.600"/><circle cx="2212.500" cy="137" r="4.600"/><circle cx="2341.500" cy="365" r="4.600"/><circle cx="2337.500" cy="551" r="4.600"/></g>
    <g fill="#c07acc"><circle cx="2018.500" cy="570" r="4.600"/><circle cx="2042.500" cy="445" r="4.600"/><circle cx="2233.500" cy="304" r="4.600"/><circle cx="2341.500" cy="386" r="4.600"/><circle cx="2210.500" cy="637" r="4.600"/><circle cx="2337.500" cy="572" r="4.600"/></g>
    <g fill="#e08a52"><circle cx="1837.500" cy="445" r="4.600"/><circle cx="1871.500" cy="461" r="4.600"/></g>
    <circle cx="1880.500" cy="570" r="4.600" fill="#6ab3e6"/>
    <g><use href="#tri" x="1471" y="194" width="10" height="14"/><use href="#tri" x="1548" y="202" width="10" height="14"/><use href="#tri" x="1392" y="417" width="10" height="14"/><use href="#tri" x="1451" y="416" width="10" height="14"/><use href="#tri" x="1625" y="416" width="10" height="14"/><use href="#tri" x="1673" y="417" width="10" height="14"/><use href="#tri" x="1833" y="417" width="10" height="14"/><use href="#tri" x="1867" y="412" width="10" height="14"/><use href="#tri" x="2016" y="412" width="10" height="14"/><use href="#tri" x="2038" y="417" width="10" height="14"/><use href="#tri" x="2153" y="417" width="10" height="14"/><use href="#tri" x="2153" y="438" width="10" height="14"/><use href="#tri" x="2337" y="316" width="10" height="14"/><use href="#tri" x="2333" y="502" width="10" height="14"/><use href="#tri" x="2527" y="316" width="10" height="14"/><use href="#tri" x="2523" y="502" width="10" height="14"/><use href="#tri" x="2621" y="323" width="10" height="14"/><use href="#tri" x="2691" y="502" width="10" height="14"/><use href="#tri" x="1159" y="741" width="10" height="14"/><use href="#tri" x="1194" y="727" width="10" height="14"/></g>
    <g><use href="#triO" x="1722" y="202" width="10" height="14"/><use href="#triO" x="1430" y="727" width="10" height="14"/><use href="#triO" x="2770" y="323" width="10" height="14"/><use href="#triO" x="2840" y="502" width="10" height="14"/></g>
    <g><use href="#po" x="1547.500" y="225" width="10" height="10"/><use href="#po" x="1721.500" y="225" width="10" height="10"/><use href="#po" x="1247.500" y="301" width="10" height="10"/><use href="#po" x="1450.500" y="439" width="10" height="10"/><use href="#po" x="1672.500" y="440" width="10" height="10"/><use href="#po" x="1182.500" y="533" width="10" height="10"/><use href="#po" x="979.500" y="743" width="10" height="10"/><use href="#po" x="979.500" y="764" width="10" height="10"/><use href="#po" x="1193.500" y="750" width="10" height="10"/><use href="#po" x="1193.500" y="771" width="10" height="10"/><use href="#po" x="1866.500" y="435" width="10" height="10"/><use href="#po" x="2015.500" y="435" width="10" height="10"/><use href="#po" x="1875.500" y="586" width="10" height="10"/><use href="#po" x="2006.500" y="132" width="10" height="10"/><use href="#po" x="2006.500" y="153" width="10" height="10"/><use href="#po" x="2336.500" y="339" width="10" height="10"/><use href="#po" x="2526.500" y="339" width="10" height="10"/><use href="#po" x="2332.500" y="525" width="10" height="10"/><use href="#po" x="2522.500" y="525" width="10" height="10"/><use href="#po" x="2620.500" y="346" width="10" height="10"/><use href="#po" x="2620.500" y="367" width="10" height="10"/><use href="#po" x="2769.500" y="346" width="10" height="10"/><use href="#po" x="2690.500" y="525" width="10" height="10"/><use href="#po" x="2690.500" y="546" width="10" height="10"/><use href="#po" x="2839.500" y="525" width="10" height="10"/></g>
  </svg>
</main>
</div>
</body>
</html>
```

FILE: styles.css
```css
* { box-sizing: border-box; }
body { margin: 0; background: #2a2a2a; color: #c4c4c4; font: 12px/16px Inter, "Liberation Sans", sans-serif; letter-spacing: -0.1px; }
p, h4 { margin: 0; font-weight: 400; }
i, em, u { font-style: normal; text-decoration: none; }
svg { display: block; flex: none; }
b { font-weight: 600; }
.defs { position: absolute; }
.grow { flex: 1; }
.app { position: relative; display: flex; width: 2928px; height: 888px; overflow: hidden; }

/* shared controls */
.in { display: flex; align-items: center; height: 18px; padding: 1px 2px 0; background: #2a2a2a; border: 1px solid #212121; border-top-color: #0d0d0d; border-radius: 3px; color: #d2d2d2; white-space: nowrap; }
.dd { display: flex; align-items: center; height: 18px; padding: 0 8px 1px 3px; background: #515151; border: 1px solid #303030; border-bottom-color: #242424; border-radius: 3px; color: #e4e4e4; }
.dd .dn { margin-left: auto; }
.dn { width: 8px; height: 5px; }
.cb { width: 14px; height: 14px; background: #2a2a2a; border: 1px solid #212121; border-top-color: #0d0d0d; border-radius: 2px; flex: none; display: block; }
.cb svg { width: 14px; height: 14px; margin: -1px; }
.code { width: 13px; height: 10px; }
.keb { width: 4px; height: 12px; }

/* inspector */
.inspector { width: 554px; flex: none; display: flex; flex-direction: column; background: #383838; border-left: 1px solid #191919; border-right: 1px solid #232323; border-top: 3px solid #191919; }
.tabs { display: flex; align-items: center; height: 20px; background: #282828; border-bottom: 1px solid #1c1c1c; }
.tab { display: flex; align-items: center; height: 20px; gap: 4px; padding-left: 8px; width: 107px; border-right: 1px solid #1c1c1c; color: #bdbdbd; }
.tab.on { width: 93px; background: #3c3c3c; border-radius: 0 3px 0 0; padding-left: 7px; gap: 5px; }
.tabs .lock { margin-right: 9px; }
.tabs .keb { margin-right: 11px; }
.scroll { display: flex; height: 671px; overflow: hidden; }
.content { width: 539px; }
.sbar { flex: 1; background: #353535; border-left: 1px solid #2b2b2b; display: flex; flex-direction: column; align-items: center; padding-top: 5px; }
.sbar i { width: 10px; height: 351px; margin-top: 6px; margin-bottom: 294px; background: #5f5f5f; border-radius: 5px; flex: none; }
.objhead { display: flex; height: 58px; padding-top: 8px; background: #3c3c3c; }
.objicon { width: 42px; padding: 1px 0 0 7px; }
.objicon .dn { margin: 0 0 0 19px; }
.orow { display: flex; height: 18px; align-items: center; margin-bottom: 6px; }
.ml4 { margin-left: 4px; }
.name { width: 403px; margin: 0 3px 0 6px; font-weight: 600; }
.static { margin: 0 4px; width: 32px; }
.tag { width: 26px; }
.w214 { width: 214px; margin-right: 13px; }
.layer { width: 36px; }
.w204 { width: 204px; }
.comp { display: flex; align-items: center; height: 22px; background: #3e3e3e; border-top: 1px solid #1c1c1c; border-bottom: 1px solid #303030; padding-left: 6px; }
.fold { border: solid transparent; border-width: 8px 4.500px 0; border-top-color: #6e6e6e; flex: none; }
.cic { width: 14px; height: 14px; margin-left: 6px; }
.cic.wide { width: 17px; height: 14px; margin: 0 -2px 0 5px; }
.cic.tt { width: 12px; height: 12px; margin: 0 1px 0 7px; }
.ml23 { margin-left: 25px; }
.hcb { margin-left: 5px; }
.ml7 { margin-left: 6px; }
.comp b { flex: 1; padding-top: 1px; color: #d2d2d2; letter-spacing: 0; }
.help, .slid { width: 12px; height: 12px; margin-right: 8px; }
.comp .keb { margin-right: 11px; margin-left: 4px; }
.rect { display: flex; height: 81px; padding-top: 7px; }
.anchor { display: flex; width: 226px; }
.anchor > div { width: 49px; }
.mid { writing-mode: vertical-rl; transform: rotate(180deg); width: 14px; margin-left: 6px; font-size: 11px; line-height: 14px; text-align: center; height: 78px; flex: none; }
.cen { display: block; font-size: 11px; line-height: 14px; text-align: center; }
.pos { display: grid; grid-template-columns: 102px 102px 102px; column-gap: 1.500px; grid-template-rows: 17px 18px 18px 18px; }
.pos > span:not(.in):not(.rb) { padding-left: 1px; line-height: 17px; }
.rb { display: flex; justify-content: flex-end; }
.rb i { width: 28px; height: 20px; margin-top: -2px; background: #585858; border: 1px solid #303030; color: #9a9a9a; display: flex; align-items: center; justify-content: center; }
.rb i:first-child { width: 25px; background: #737373; border-right: 1px solid #2a2a2a; }
.line { display: flex; height: 18px; align-items: center; padding-left: 19px; }
.anch { padding-left: 8px; gap: 4px; margin-bottom: 1px; }
.fold.side { border-width: 4.500px 0 4.500px 8px; border-top-color: transparent; border-left-color: #6e6e6e; }
.lab { width: 208px; }
.pv em { width: 11px; }
.pv .in { width: 90px; margin-right: 3px; }
.pv { margin-bottom: 10px; }
.xyz em { width: 11px; }
.xyz .lab { width: 211px; }
.xyz .in { width: 87px; margin-right: 5px; }
.rot { margin-bottom: 2px; }
.scl { margin-bottom: 7px; }
.cull { display: flex; height: 29px; align-items: center; padding-left: 19px; }
.l1 { width: 210px; padding-top: 1px; }
.textlab { padding: 5px 0 0 19px; height: 22px; line-height: 18px; }
.area { margin: 0 3px 2px 18px; height: 44px; padding: 1px 2px; background: #2a2a2a; border: 1px solid #212121; border-top-color: #0d0d0d; border-radius: 3px; color: #d2d2d2; }
.f { display: flex; height: 20px; align-items: flex-start; padding-left: 34px; line-height: 20px; }
.f > span:first-child { width: 195px; }
.f .in, .f .dd, .f .col { width: 307px; line-height: 16px; }
.f .cb { margin-top: 2px; }
.f.last { height: 18px; }
.f.head { padding-left: 19px; }
.f.out { padding-left: 19px; }
.f.out > span:first-child { width: 210px; }
.obj strong { font: 900 8px/12px Inter, sans-serif; margin: 0 3px 0 2px; }
.obj i { background: #383838; height: 16px; width: 13px; margin: 0 -3px 0 auto; display: flex; align-items: center; }
.obj i svg { width: 12px; height: 12px; }
.col { display: flex; height: 18px; border: 1px solid #212121; border-radius: 2px; align-items: center; background: #383838; }
.col i { flex: 1; height: 16px; background: #fff; }
.col svg { width: 14px; height: 14px; margin: 0 1px 0 3px; }
.lphead { display: flex; align-items: center; height: 22px; background: #3c3c3c; border: solid #232323; border-width: 1px 0; padding-left: 7px; gap: 5px; }
.lphead b { padding-top: 2px; }
.dbl { flex: 1; height: 4px; border: solid #5a5a5a; border-width: 1px 0; margin-right: -3px; }
.kcell { width: 16px; height: 20px; border-left: 1px solid #232323; display: flex; align-items: center; justify-content: center; }
.lp { flex: 1; background: #313131; padding: 6px 0 0 6px; color: #b4b4b4; }
.lrow { display: grid; grid-template-columns: 110px 100px 100px; height: 18px; line-height: 19px; }
.lh { height: 20px; }
.add { margin-top: 10px; line-height: 19px; }

/* graph inspector + blackboard */
.graphinsp { width: 334px; flex: none; background: #3c3c3c; border-right: 1px solid #1f1f1f; }
.gtop { display: flex; height: 151px; overflow: hidden; }
.gcont { width: 320px; }
.gtitle { display: flex; height: 20px; border-bottom: 1px solid #1e1e1e; padding-left: 4px; margin-bottom: 4px; }
.gtitle span { margin-left: 12px; line-height: 13px; height: 15px; }
.glist { height: 43px; }
.gh { height: 20px; border-top: 1px solid #1e1e1e; border-bottom: 1px solid #1e1e1e; background: #303030; padding-left: 3px; line-height: 20px; box-shadow: inset 0 1px #4a4a4a; color: #cecece; }
.gb { height: 18px; display: flex; justify-content: flex-end; border-top: 1px solid #4a4a4a; }
.pl { width: 29px; height: 18px; background: #4f4f4f; border: 1px solid #242424; border-bottom-color: #6a6a6a; display: flex; align-items: center; justify-content: center; }
.gb .pl { height: 17px; }
.pl svg { width: 9px; height: 9px; }
.gsb { flex: 1; border-left: 1px solid #2b2b2b; background: #353535; display: flex; flex-direction: column; align-items: center; }
.gsb i { width: 10px; height: 109px; background: #5f5f5f; border-radius: 0 0 5px 5px; margin-bottom: 32px; }
.bbar { display: flex; height: 19px; border-top: 1px solid #232323; border-bottom: 1px solid #232323; }
.bt { width: 297px; display: flex; align-items: center; gap: 3px; padding-left: 4px; }
.bi { width: 22px; border-left: 1px solid #232323; display: flex; align-items: center; justify-content: center; padding-top: 2px; }
.bs { flex: 1; border-left: 1px solid #232323; display: flex; flex-direction: column; align-items: center; justify-content: space-around; background: #353535; }
.vtabs { display: flex; height: 21px; background: #232323; border-bottom: 1px solid #232323; gap: 1px; }
.vtabs div { flex: 1; display: flex; align-items: center; justify-content: center; gap: 4px; padding-top: 2px; background: #3c3c3c; }
.vtabs div.on { background: #505050; flex: none; width: 64px; }
.vtabs svg { width: 15px; height: 15px; margin-top: -2px; }
.vinfo { display: flex; height: 48px; padding: 9px 0 0 6px; gap: 8px; border-bottom: 1px solid #232323; }
.vinfo svg { width: 31px; height: 31px; }
.vinfo h4 { font-size: 13px; line-height: 16px; margin-top: -2px; }
.vinfo p { white-space: nowrap; }
.var { display: flex; height: 66px; padding-top: 4px; background: #505050; border-bottom: 1px solid #6a6a6a; border-right: 1px solid #6a6a6a; }
.grip { width: 10px; height: 5px; margin: 27px 7px 0 6px; border: solid #353535; border-width: 1px 0; }
.vf { display: grid; grid-template-columns: 37px 244px; row-gap: 2px; height: 58px; grid-auto-rows: 18px; }
.vf .in { padding-left: 3px; }
.vf .dd .dot { width: 14px; height: 14px; margin: 0 5px 0 1px; }
.vf .dd .dn { margin-right: -3px; }
.vf label { line-height: 20px; }
.minus { width: 8px; height: 2px; background: #d8d8d8; margin: 28px 0 0 12px; }
.newvar { display: flex; height: 18px; background: #2a2a2a; color: #808080; }
.newvar span:first-child { flex: 1; text-align: right; padding-right: 5px; line-height: 19px; }

/* graph canvas */
.canvas { position: absolute; inset: 0; z-index: 0; }
.inspector, .graphinsp { position: relative; z-index: 1; }
.grid { position: absolute; top: 0; bottom: 0; background-image: linear-gradient(90deg, #1f1f1f 1px, transparent 1px), linear-gradient(#1f1f1f 1px, transparent 1px), linear-gradient(90deg, #262626 1px, transparent 1px), linear-gradient(#262626 1px, transparent 1px); background-size: 120px 120px, 120px 120px, 12px 12px, 12px 12px; }
.gl { left: 888px; width: 958px; background-position: 105px 64px; }
.gr { left: 1846px; right: 0; background-position: 114px 62px; }
.blank { position: absolute; background: #fff; }
.b1 { left: 2476px; right: 0; top: 0; height: 28px; }
.b2 { left: 2476px; right: 0; top: 687px; bottom: 0; }
.b3 { left: 1854px; right: 0; top: 825px; bottom: 0; }
.wires { position: absolute; left: 0; top: 0; }
.node { position: absolute; border-radius: 4px; background: #3c3c3c; box-shadow: 0 1px 3px 1px rgba(0, 0, 0, .35); border-bottom: 5px solid #48494b; }
.node.ev { border-bottom-color: #04601f; }
.node.va { border-bottom-color: #42665f; }
.hd { display: flex; align-items: center; gap: 7px; padding-left: 6px; border-radius: 4px 4px 0 0; background: linear-gradient(#505255, #4a4d50); border-top: 1px solid #707274; box-shadow: inset 1px 0 #5d6062, inset -1px 0 #5d6062; color: #e2e2e2; }
.ev .hd { background: linear-gradient(#267d3b, #17702d); border-top-color: #4f9c62; box-shadow: inset 1px 0 #35884a, inset -1px 0 #35884a; }
.va .hd { background: linear-gradient(#5c8f82, #4e7d72); border-top-color: #86b3a8; box-shadow: inset 1px 0 #6a9c90, inset -1px 0 #6a9c90; }
.hd > svg { width: 30px; height: 30px; }
.hd > .tee { width: 24px; height: 24px; margin: 0 3px; }
.h42 { height: 42px; }
.h45 { height: 45px; }
.h47 { height: 47px; }
.t { align-self: flex-start; padding-top: 5px; white-space: nowrap; }
.t small { display: block; font-size: 10px; line-height: 14px; letter-spacing: 0; }
.t.ts { padding-top: 6px; }
.t.st { padding-top: 4px; }
.t.st p { line-height: 18px; }
.t.one { align-self: center; padding-top: 1px; }
.t .cb { margin-top: 3px; }
.sel { display: inline-flex; align-items: center; gap: 4px; height: 18px; margin-top: 1px; padding: 0 5px 1px 3px; background: #515151; border: 1px solid #303030; border-radius: 3px; color: #dcdcdc; vertical-align: top; }
.args { display: flex; gap: 5px; margin-top: 1px; line-height: 16px; }
.bd { border-top: 1px solid #1b1b1b; border-bottom: 1px solid #1b1b1b; padding: 6px 6px 5px; display: flex; flex-direction: column; gap: 3px; }
.row { display: flex; height: 18px; align-items: center; gap: 6px; white-space: nowrap; }
.row > span { line-height: 20px; }
.row > .grow { margin: 0 -6px; }
.row > svg { width: 14px; height: 14px; margin-top: -3px; }
.row > .tsm { width: 12px; height: 12px; margin: -3px 1px 0; }
.bd .in { padding: 1px 3px 0 2px; }
.args .in { padding: 1px 3px 0; }
.combo { display: flex; align-items: center; justify-content: space-between; height: 18px; padding: 1px 4px 0 2px; background: #2a2a2a; border: 1px solid #212121; border-top-color: #0d0d0d; border-radius: 3px; color: #d2d2d2; }
.self { display: flex; align-items: center; width: 75px; height: 18px; padding-left: 1px; background: #2a2a2a; border: 1px solid #212121; border-radius: 3px; color: #c4c4c4; }
.self u { width: 54px; height: 14px; line-height: 14px; background: #404040; padding-left: 1px; }
.self i { width: 17px; height: 16px; margin-left: auto; margin-right: -4px; background: #3a3a3a; border-radius: 3px; display: flex; align-items: center; justify-content: center; }
.self i svg { width: 13px; height: 13px; }
.go { width: 90px; margin-top: 1px; gap: 2px; color: #d2d2d2; }
.go > svg { width: 13px; height: 13px; }
.row .col { width: 75px; }
.col.red i { background: linear-gradient(#f00 13px, #fff 13px); }
.row .col svg { width: 14px; height: 14px; }
.wheel { width: 15px; height: 15px; margin: -3px -1px 0 0; border-radius: 50%; background: radial-gradient(#fff 5%, transparent 60%), conic-gradient(from 90deg, #f33, #e3f 17%, #33f 33%, #3ef 50%, #3f6 67%, #ff3 83%, #f33); border: 1px solid #bbb; }
```
